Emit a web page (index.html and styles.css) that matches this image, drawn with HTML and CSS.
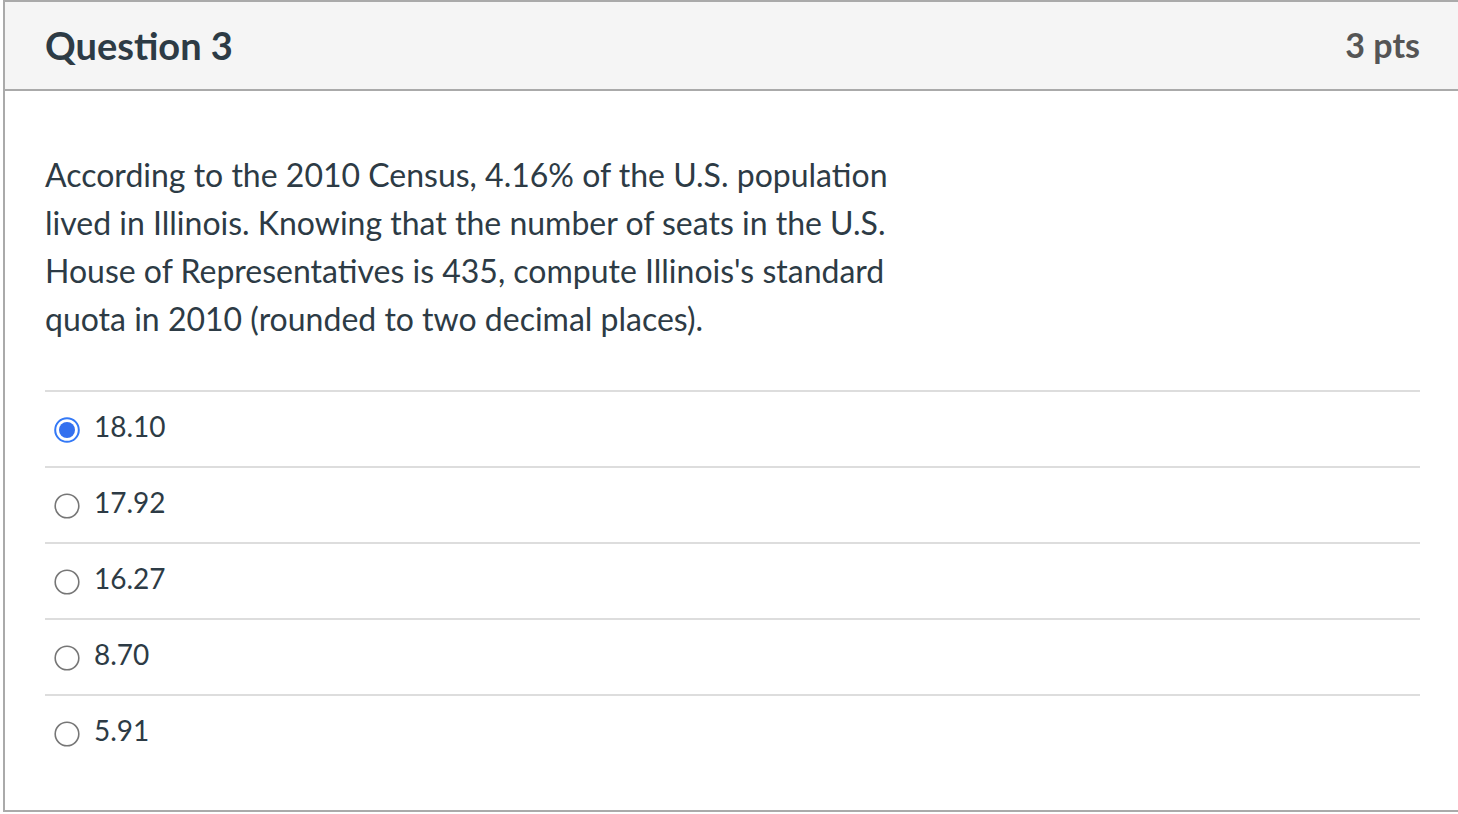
FILE: index.html
```html
<!DOCTYPE html>
<html>
<head>
<meta charset="utf-8">
<link rel="stylesheet" href="styles.css">
</head>
<body>
<div class="question">
  <div class="header">
    <h2 class="title">Question 3</h2>
    <span class="pts">3 pts</span>
  </div>
  <div class="content">
    <p class="text">According to the 2010 Census, 4.16% of the U.S. population<br>lived in Illinois. Knowing that the number of seats in the U.S.<br>House of Representatives is 435, compute Illinois's standard<br>quota in 2010 (rounded to two decimal places).</p>
    <div class="answers">
      <div class="answer">
        <svg class="radio" width="26" height="26" viewBox="0 0 26 26"><circle cx="13" cy="13" r="11.8" fill="#fff" stroke="#3479f6" stroke-width="2"/><circle cx="13" cy="13" r="8" fill="#3470ef"/></svg>
        <span class="label">18.10</span>
      </div>
      <div class="answer">
        <svg class="radio" width="26" height="26" viewBox="0 0 26 26"><circle cx="13" cy="13" r="11.8" fill="#fff" stroke="#767676" stroke-width="1.6"/></svg>
        <span class="label">17.92</span>
      </div>
      <div class="answer">
        <svg class="radio" width="26" height="26" viewBox="0 0 26 26"><circle cx="13" cy="13" r="11.8" fill="#fff" stroke="#767676" stroke-width="1.6"/></svg>
        <span class="label">16.27</span>
      </div>
      <div class="answer">
        <svg class="radio" width="26" height="26" viewBox="0 0 26 26"><circle cx="13" cy="13" r="11.8" fill="#fff" stroke="#767676" stroke-width="1.6"/></svg>
        <span class="label">8.70</span>
      </div>
      <div class="answer">
        <svg class="radio" width="26" height="26" viewBox="0 0 26 26"><circle cx="13" cy="13" r="11.8" fill="#fff" stroke="#767676" stroke-width="1.6"/></svg>
        <span class="label">5.91</span>
      </div>
    </div>
  </div>
</div>
</body>
</html>
```
FILE: styles.css
```css
html, body {
  margin: 0;
  padding: 0;
  background: #fff;
  overflow: hidden;
}
body {
  font-family: Lato, "Liberation Sans", sans-serif;
  color: #2d3b45;
}
.question {
  margin-left: 3px;
  width: 1459px;
  box-sizing: border-box;
  border: 2px solid #aaa;
  height: 812px;
}
.header {
  box-sizing: border-box;
  height: 89px;
  background: #f5f5f5;
  border-bottom: 2px solid #aaa;
  display: flex;
  align-items: center;
  justify-content: space-between;
  padding: 0 40px 0 40px;
  width: 1455px;
}
.title {
  margin: 0;
  font-size: 38px;
  font-weight: 700;
  color: #2d3b45;
  position: relative;
  top: -1px;
}
.pts {
  font-size: 34px;
  font-weight: 700;
  color: #555;
  position: relative;
  top: -1px;
}
.content {
  padding: 60px 0 0 40px;
  width: 1375px;
}
.text {
  margin: 0;
  font-size: 32px;
  line-height: 48px;
}
.answers {
  margin-top: 47px;
}
.answer {
  border-top: 2px solid #ddd;
  height: 74px;
  display: flex;
  align-items: center;
}
.radio {
  margin-left: 9px;
  margin-right: 14px;
  flex: none;
  position: relative;
  top: 1px;
}
.label {
  font-size: 28px;
  position: relative;
  top: -3px;
}
```
